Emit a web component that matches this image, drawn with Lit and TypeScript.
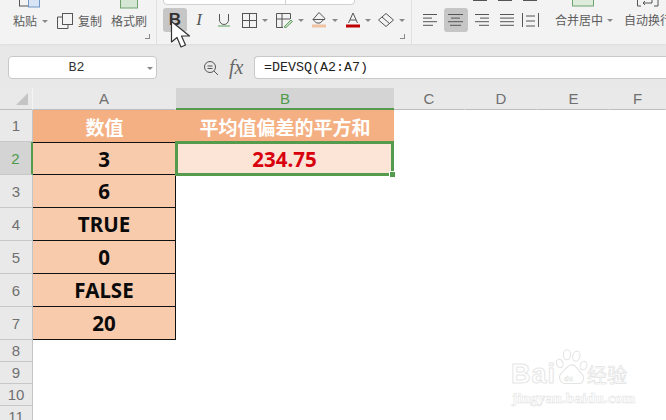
import { LitElement, html, css, svg } from "lit";
import { customElement } from "lit/decorators.js";

const arrow = html`<i class="caret"></i>`;
const ic = (w: number, h: number, body: unknown) =>
  html`<svg width=${w} height=${h} viewBox="0 0 ${w} ${h}" fill="none" stroke="#555" stroke-width="1">${body}</svg>`;

@customElement("app-root")
export class AppRoot extends LitElement {
  static styles = css`
    :host { display: block; width: 666px; height: 420px; position: relative; overflow: hidden; background: #fff;
      font-family: "Liberation Sans", "Noto Sans CJK SC", sans-serif; }
    .ribbon { height: 44px; background: #f3f3f3; display: flex; box-sizing: border-box; position: relative;
      box-shadow: 0 1px 2px #dcdcdc; z-index: 1; overflow: hidden; }
    .lbl { font: 12px "Noto Sans CJK SC", sans-serif; color: #5c5c5c; white-space: nowrap; line-height: 16px; }
    .caret { display: inline-block; width: 0; height: 0; border: 3px solid transparent; border-top: 3px solid #888; border-bottom: 0; flex: none; }
    .g-clip { width: 157px; display: flex; align-items: flex-start; padding-top: 13px; box-sizing: border-box; position: relative; border-right: 1px solid #e0e0e0; flex: none; }
    .g-font { width: 255px; position: relative; border-right: 1px solid #e0e0e0; box-sizing: border-box; display: flex; align-items: center; padding: 8px 0 12px 6px; flex: none; }
    .g-align { flex: 1; display: flex; align-items: center; padding: 8px 0 12px 11px; position: relative; min-width: 0; }
    .paste { width: 57px; padding-left: 13px; box-sizing: border-box; display: flex; align-items: center; gap: 5px; height: 16px; flex: none; }
    .copy { width: 54px; display: flex; align-items: center; gap: 5px; height: 16px; flex: none; }
    .copy svg { flex: none; }
    .brush { display: flex; align-items: center; height: 16px; }
    .paste-icon { position: absolute; left: 19px; top: -5px; }
    .brush-icon { position: absolute; left: 120px; top: -1px; }
    .launcher { position: absolute; right: 6px; bottom: 5px; width: 4px; height: 4px; border-right: 1px solid #888; border-bottom: 1px solid #888; }
    .btn { width: 24px; height: 24px; border-radius: 3px; display: flex; align-items: center; justify-content: center; flex: none; }
    .on { background: #c6c6c6; }
    .b { font: bold 17px "Liberation Sans", sans-serif; color: #333; }
    .i { font: italic 17px "Liberation Serif", serif; color: #555; }
    .tool { display: flex; align-items: center; gap: 5px; flex: none; }
    .tool svg { flex: none; }
    .combo { position: absolute; left: 6px; top: -14px; width: 192px; height: 19px; background: #fff; border: 1px solid #d0d0d0; border-radius: 4px; box-sizing: border-box; }
    .combo::after { content: ""; position: absolute; left: 121px; top: 0; bottom: 0; width: 1px; background: #d0d0d0; }
    .top-icon { position: absolute; top: -1px; }
    .bar { height: 44px; background: #e8e8e8; display: flex; align-items: flex-start; padding-top: 12px; box-sizing: border-box; }
    .name { width: 149px; height: 23px; margin-left: 8px; background: #fff; border: 1px solid #c8c8c8; border-radius: 4px; box-sizing: border-box;
      display: flex; align-items: center; justify-content: center; position: relative; padding-right: 12px;
      font: 13.3px "Liberation Mono", monospace; color: #333; }
    .name .caret { position: absolute; right: 3px; top: 10px; }
    .fn { width: 97px; height: 23px; display: flex; align-items: center; padding-left: 46px; gap: 10px; box-sizing: border-box; }
    .fn svg { flex: none; }
    .fx { font: italic 20px "Liberation Serif", serif; color: #666; }
    .input { flex: 1; height: 23px; background: #fff; border: 1px solid #c8c8c8; border-right: 0; border-radius: 4px 0 0 4px; box-sizing: border-box;
      display: flex; align-items: center; padding-left: 9px; font: 13.33px "Liberation Mono", monospace; color: #222; }
    .sheet { display: grid; grid-template-columns: 33px 143px 218px 71px 73px 72px 56px;
      grid-template-rows: 22px 32px 33px 33px 33px 33px 33px 33px 22px 22px 22px 22px; }
    .h { background: #e9e9e9; display: flex; align-items: center; justify-content: center; box-sizing: border-box;
      font: 15px "Liberation Sans", sans-serif; color: #707070; }
    .ch { border-bottom: 1px solid #bdbdbd; border-right: 1px solid #e9e9e9; }
    .rh { border-bottom: 1px solid #c8c8c8; border-right: 1px solid #c4c4c4; }
    .corner { border-right: 1px solid #f4f4f4; border-bottom: 1px solid #bdbdbd; position: relative; }
    .corner::after { content: ""; position: absolute; right: 4px; bottom: 4px; border-left: 12px solid transparent; border-bottom: 12px solid #c4c4c4; }
    .ch.sel { background: #d4d4d4; color: #4e9a4a; border-bottom: 2px solid #559b4d; border-right: 0; }
    .rh.sel { background: #d4d4d4; color: #4e9a4a; border-right: 2px solid #559b4d; }
    .cell { display: flex; align-items: center; justify-content: center; box-sizing: border-box;
      font: bold 20.5px "Noto Sans", "Noto Sans CJK SC", sans-serif; color: #0a0a0a; }
    .head { background: #f4b083; color: #fff; font: bold 19px "Noto Sans CJK SC", sans-serif; }
    .val { background: #f8cbad; border-right: 1px solid #111; border-bottom: 1px solid #111; }
    .val.first { border-top: 1px solid #111; }
    .result { background: #fce4d6; color: #d9000d; border: 3px solid #559b4d; position: relative; margin: -1px 0 -1px -1px; width: 219px; }
    .handle { position: absolute; right: -5px; bottom: -5px; width: 5px; height: 5px; background: #559b4d; border: 1px solid #fff; }
    .empty { background: #fff; }
    .cursor { position: absolute; left: 170px; top: 20px; z-index: 3; }
    .mark { position: absolute; left: 510px; top: 348px; width: 130px; height: 62px; z-index: 2; }
    .mark .word { position: absolute; left: 1px; top: 11px; font: bold 27px "Liberation Sans", sans-serif; color: #fff; -webkit-text-stroke: 1px #e6e6e6; letter-spacing: 1px; }
    .mark .cn { position: absolute; left: 77px; top: 15px; font: 20px "Noto Sans CJK SC", sans-serif; color: #fff; -webkit-text-stroke: .7px #e2e2e2; line-height: 24px; white-space: nowrap; }
    .mark .url { position: absolute; left: 2px; top: 41px; font: bold 15.5px "Liberation Serif", serif; color: #fff; -webkit-text-stroke: .6px #e4e4e4; white-space: nowrap; }
    .mark svg { position: absolute; left: 44px; top: 0; }
    .du { font: bold 10px "Liberation Sans", sans-serif; }
  `;

  private vals = ["3", "6", "TRUE", "0", "FALSE", "20"];

  private lines(rows: [number, number][]) {
    return ic(16, 14, rows.map(([a, b], i) => svg`<path d="M${a} ${1.5 + i * 3.6}H${b}" />`));
  }

  render() {
    const rowsBelow = [8, 9, 10, 11];
    return html`
      <div class="ribbon">
        <div class="g-clip">
          <svg class="paste-icon" width="22" height="13" viewBox="0 0 22 13" fill="none"><rect x=".5" y="0" width="14" height="11" stroke="#555"/><rect x="9.5" y="2" width="11" height="10" fill="#d6e4f5" stroke="#6f96c6"/></svg>
          <svg class="brush-icon" width="19" height="12" viewBox="0 0 19 12" fill="none"><rect x=".5" y="-1" width="17" height="10" fill="#d5e6d5" stroke="#6ea36e"/></svg>
          <div class="paste"><span class="lbl">粘贴</span>${arrow}</div>
          <div class="copy">
            ${ic(16, 16, svg`<rect x="5.5" y=".5" width="10" height="11"/><path d="M5 4H.5V15.5H11V12"/>`)}
            <span class="lbl">复制</span>
          </div>
          <div class="brush"><span class="lbl">格式刷</span></div>
          <i class="launcher"></i>
        </div>
        <div class="g-font">
          <div class="combo"></div>
          <div class="btn on"><span class="b">B</span></div>
          <div class="btn"><span class="i">I</span></div>
          <div class="btn" style="margin-left:1px">${ic(12, 14, svg`<path d="M1.5 1V7a4.5 4.5 0 0 0 9 0V1" /><path d="M0 13H12" stroke="#5d9e5d"/>`)}</div>
          <div class="tool" style="margin-left:6px">${ic(15, 15, svg`<rect x=".5" y=".5" width="14" height="14"/><path d="M7.5 .5V14.5M.5 7.5H14.5"/>`)}${arrow}</div>
          <div class="tool" style="margin-left:8px">${ic(17, 15, svg`<path d="M14.5 6V.5H.5V14.5H7M.5 6H14M6 .5V14"/><path d="M8 14L15 7l1.5 1.5L10 14.5Z" stroke="#5d9e5d" fill="#cfe3cf"/>`)}${arrow}</div>
          <div class="tool" style="margin-left:7px">${ic(16, 16, svg`<path d="M8 .5L14 6.5L9 11H5.5L2 7.5Z"/><path d="M2 7.5H14" /><rect x="1" y="12.5" width="14" height="3" fill="#f0c3a3" stroke="none"/>`)}${arrow}</div>
          <div class="tool" style="margin-left:8px"><svg width="14" height="16" viewBox="0 0 14 16" fill="none" stroke="#555"><path d="M2.5 11L7 1l4.5 10M4 8H10"/><rect x="0" y="12.5" width="14" height="3" fill="#c00000" stroke="none"/></svg>${arrow}</div>
          <div class="tool" style="margin-left:7px">${ic(16, 14, svg`<path d="M8 .5L15.5 7L8 13.5L.5 7Z"/><path d="M4 4L11.5 10.5" />`)}${arrow}</div>
          <i class="launcher"></i>
        </div>
        <div class="g-align">
          <div class="btn" style="width:17px;justify-content:flex-start">${this.lines([[0, 14], [0, 9], [0, 14], [0, 10]])}</div>
          <div class="btn on" style="margin-left:4px">${this.lines([[0, 15], [3, 12], [0, 15], [2, 13]])}</div>
          <div class="btn" style="margin-left:5px;width:17px">${this.lines([[1, 15], [6, 15], [1, 15], [5, 15]])}</div>
          <div class="btn" style="margin-left:8px;width:17px">${this.lines([[1, 15], [1, 15], [1, 15], [1, 15]])}</div>
          <div class="btn" style="margin-left:7px;width:17px">${ic(17, 14, svg`<path d="M.5 0V14M16.5 0V14M4 3H13M4 8H13M4 13H13"/>`)}</div>
          <span class="lbl" style="margin-left:16px">合并居中</span>
          <span style="margin:0 0 0 4px;display:flex">${arrow}</span>
          <span class="lbl" style="margin-left:11px">自动换行</span>
          <svg class="top-icon" style="left:160px" width="22" height="9" viewBox="0 0 22 9" fill="none"><rect x=".5" y="-2" width="21" height="9" fill="#dcebdc" stroke="#6ea36e"/></svg>
          <svg class="top-icon" style="left:225px" width="22" height="9" viewBox="0 0 22 9" fill="none" stroke="#555"><path d="M.5 0V7H4M21 0V7H17M6 4H15V0M6 4l2-2M6 4l2 2"/></svg>
          <svg class="top-icon" style="left:61px" width="66" height="3" viewBox="0 0 66 3" fill="none" stroke="#555"><path d="M0 1.5H14M25 1.5H39M50 1.5H64"/></svg>
        </div>
      </div>
      <div class="bar">
        <div class="name">B2<i class="caret"></i></div>
        <div class="fn">
          ${ic(16, 16, svg`<circle cx="7" cy="7" r="5.5"/><path d="M4.5 6H9.5M4.5 8.5H9.5M11 11L15 15"/>`)}
          <span class="fx">fx</span>
        </div>
        <div class="input">=DEVSQ(A2:A7)</div>
      </div>
      <div class="sheet">
        <div class="h corner"></div>
        <div class="h ch">A</div><div class="h ch sel">B</div><div class="h ch">C</div><div class="h ch">D</div><div class="h ch">E</div><div class="h ch">F</div>

        <div class="h rh">1</div>
        <div class="cell head">数值</div><div class="cell head">平均值偏差的平方和</div>
        <div class="empty"></div><div class="empty"></div><div class="empty"></div><div class="empty"></div>

        ${this.vals.map((v, i) => html`
          <div class="h rh ${i === 0 ? "sel" : ""}">${i + 2}</div>
          <div class="cell val ${i === 0 ? "first" : ""}">${v}</div>
          ${i === 0 ? html`<div class="cell result">234.75<i class="handle"></i></div>` : html`<div class="empty"></div>`}
          <div class="empty"></div><div class="empty"></div><div class="empty"></div><div class="empty"></div>
        `)}

        ${rowsBelow.map((n) => html`
          <div class="h rh">${n}</div>
          <div class="empty"></div><div class="empty"></div><div class="empty"></div><div class="empty"></div><div class="empty"></div><div class="empty"></div>
        `)}
      </div>

      <svg class="cursor" width="22" height="29" viewBox="0 0 22 29"><path d="M1.5 1.5V22L7 17.5L11 27L15.5 25L11.5 16H19.5Z" fill="#fff" stroke="#333" stroke-width="1.2" stroke-linejoin="round"/></svg>

      <div class="mark">
        <svg width="36" height="38" viewBox="0 0 50 52" fill="#fff" stroke="#e4e4e4" stroke-width="1.5">
          <ellipse cx="8" cy="21" rx="4.5" ry="6" transform="rotate(-15 8 21)"/>
          <ellipse cx="18" cy="9" rx="5" ry="7"/>
          <ellipse cx="31" cy="11" rx="5" ry="7" transform="rotate(15 31 11)"/>
          <ellipse cx="41" cy="24" rx="4.5" ry="6" transform="rotate(20 41 24)"/>
          <path d="M25 23C18 23 16 30 10 35C5 40 9 50 17 49H33C41 50 44 40 38 35C33 30 31 23 25 23Z"/>
          <text class="du" x="14" y="45" fill="#fff" stroke="#e4e4e4" stroke-width=".7">du</text>
        </svg>
        <span class="word">Bai</span>
        <span class="cn">经验</span>
        <span class="url">jingyan.baidu.com</span>
      </div>
    `;
  }
}
